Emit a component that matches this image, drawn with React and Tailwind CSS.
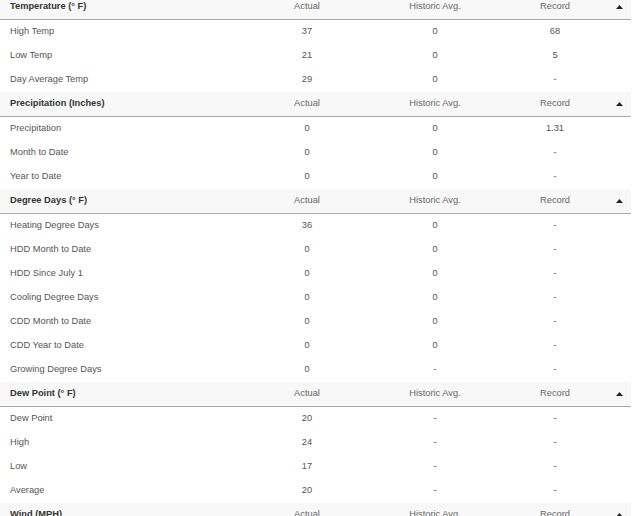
const SECTIONS = [
  {
    title: 'Temperature (° F)',
    rows: [
      ['High Temp', '37', '0', '68'],
      ['Low Temp', '21', '0', '5'],
      ['Day Average Temp', '29', '0', '-'],
    ],
  },
  {
    title: 'Precipitation (Inches)',
    rows: [
      ['Precipitation', '0', '0', '1.31'],
      ['Month to Date', '0', '0', '-'],
      ['Year to Date', '0', '0', '-'],
    ],
  },
  {
    title: 'Degree Days (° F)',
    rows: [
      ['Heating Degree Days', '36', '0', '-'],
      ['HDD Month to Date', '0', '0', '-'],
      ['HDD Since July 1', '0', '0', '-'],
      ['Cooling Degree Days', '0', '0', '-'],
      ['CDD Month to Date', '0', '0', '-'],
      ['CDD Year to Date', '0', '0', '-'],
      ['Growing Degree Days', '0', '-', '-'],
    ],
  },
  {
    title: 'Dew Point (° F)',
    rows: [
      ['Dew Point', '20', '-', '-'],
      ['High', '24', '-', '-'],
      ['Low', '17', '-', '-'],
      ['Average', '20', '-', '-'],
    ],
  },
  {
    title: 'Wind (MPH)',
    rows: [],
  },
]

const COLS = 'grid grid-cols-[246px_122px_134px_106px_23px] items-center'

function Caret() {
  return (
    <svg width="7" height="4" viewBox="0 0 7 4" aria-hidden="true">
      <path d="M0 4 L3.5 0 L7 4 Z" fill="#222" />
    </svg>
  )
}

function Section({ title, rows }) {
  return (
    <section>
      <div className={`${COLS} h-[25px] bg-[#f8f8f8] border-b border-[#a8a8a8]`}>
        <span className="pl-[10px] font-bold text-[#333]">{title}</span>
        <span className="text-center text-[#666]">Actual</span>
        <span className="text-center text-[#666]">Historic Avg.</span>
        <span className="text-center text-[#666]">Record</span>
        <span className="flex justify-center"><Caret /></span>
      </div>
      {rows.map(([label, actual, avg, record]) => (
        <div key={label} className={`${COLS} h-6 text-[#555]`}>
          <span className="pl-[10px]">{label}</span>
          <span className="text-center">{actual}</span>
          <span className="text-center">{avg}</span>
          <span className="text-center">{record}</span>
          <span />
        </div>
      ))}
    </section>
  )
}

export default function App() {
  return (
    <div className="h-[516px] overflow-hidden bg-white">
      <div className="w-[631px] -mt-[5px] text-[9.3px] leading-none" style={{ fontFamily: '"Liberation Sans", Arial, sans-serif' }}>
        {SECTIONS.map(s => <Section key={s.title} {...s} />)}
      </div>
    </div>
  )
}
